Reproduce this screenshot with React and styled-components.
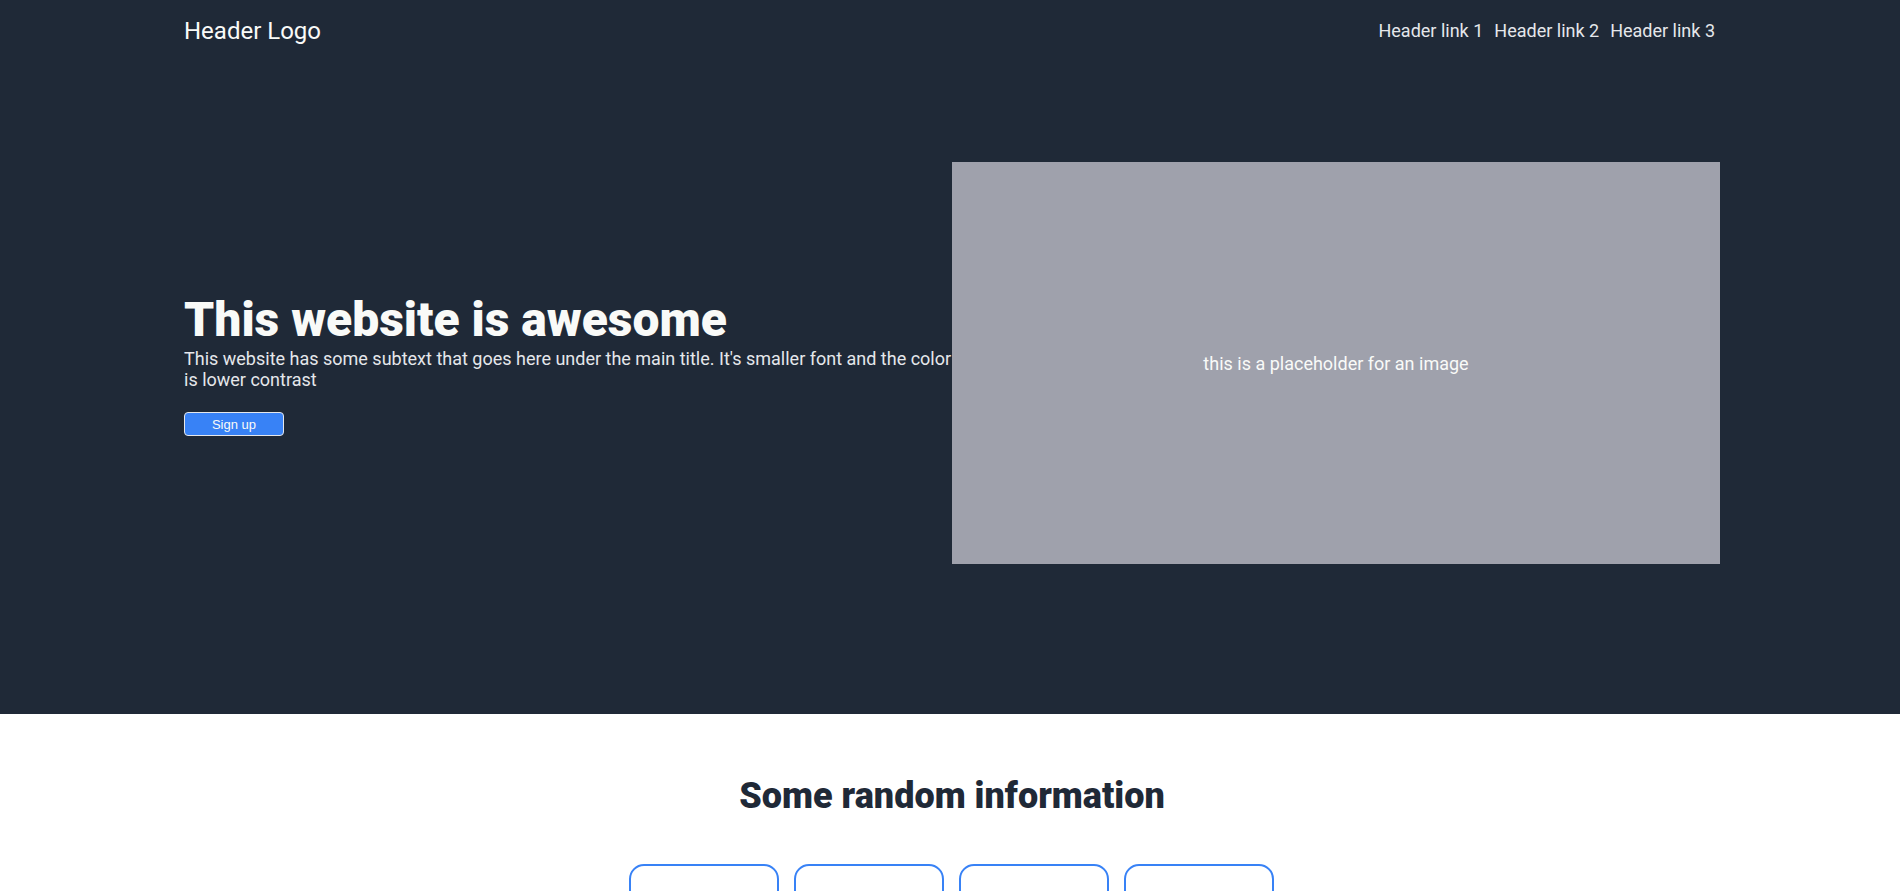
import React from "react";
import styled, { createGlobalStyle } from "styled-components";

const GlobalStyle = createGlobalStyle`
  html, body {
    margin: 0;
    padding: 0;
    background: #ffffff;
  }
  body {
    font-family: Roboto, "Liberation Sans", Arial, sans-serif;
  }
  * { box-sizing: border-box; }
`;

const Hero = styled.section`
  background: #1f2937;
  height: 714px;
  display: flex;
  flex-direction: column;
`;

const Container = styled.div`
  width: 1536px;
  margin-left: calc(50% - 766px);
`;

const Header = styled(Container)`
  display: flex;
  justify-content: space-between;
  align-items: center;
  height: 60px;
  padding-top: 1px;
`;

const Logo = styled.div`
  color: #f9faf8;
  font-size: 24px;
  font-weight: 400;
`;

const Nav = styled.nav`
  display: flex;
  gap: 11px;
  padding-right: 5px;
`;

const NavLink = styled.a`
  color: #e5e7eb;
  font-size: 18px;
  text-decoration: none;
`;

const HeroMain = styled(Container)`
  display: flex;
  align-items: center;
  padding-top: 102px;
`;

const HeroText = styled.div`
  width: 768px;
  display: flex;
  flex-direction: column;
  align-items: flex-start;
`;

const Title = styled.h1`
  margin: 2px 0 0;
  color: #f9faf8;
  font-size: 48px;
  font-weight: 900;
  line-height: 56px;
`;

const Subtext = styled.p`
  margin: 0;
  color: #e5e7eb;
  font-size: 18px;
  line-height: 21px;
`;

const Button = styled.button`
  margin-top: 22px;
  width: 100px;
  height: 24px;
  background: #3882f6;
  color: #f9faf8;
  border: 1px solid #e5e7eb;
  border-radius: 4px;
  font-family: "Liberation Sans", Arial, sans-serif;
  font-size: 13px;
  padding: 0;
`;

const ImagePlaceholder = styled.div`
  width: 768px;
  height: 402px;
  background: #9fa1ac;
  color: #f9faf8;
  font-size: 18px;
  display: flex;
  align-items: center;
  justify-content: center;
`;

const Info = styled.section`
  padding-top: 61px;
`;

const InfoInner = styled(Container)`
  display: flex;
  flex-direction: column;
  align-items: center;
`;

const InfoTitle = styled.h2`
  margin: 0;
  color: #1f2937;
  font-size: 36px;
  font-weight: 900;
  line-height: 42px;
`;

const Cards = styled.div`
  margin-top: 47px;
  display: flex;
  gap: 15px;
  padding-right: 2px;
`;

const Card = styled.div`
  width: 150px;
  height: 150px;
  border: 2px solid #3882f6;
  border-radius: 15px;
`;

export default function App() {
  return (
    <>
      <GlobalStyle />
      <Hero>
        <Header>
          <Logo>Header Logo</Logo>
          <Nav>
            <NavLink href="#">Header link 1</NavLink>
            <NavLink href="#">Header link 2</NavLink>
            <NavLink href="#">Header link 3</NavLink>
          </Nav>
        </Header>
        <HeroMain>
          <HeroText>
            <Title>This website is awesome</Title>
            <Subtext>
              This website has some subtext that goes here under the main title. It's smaller font and the color is lower contrast
            </Subtext>
            <Button>Sign up</Button>
          </HeroText>
          <ImagePlaceholder>this is a placeholder for an image</ImagePlaceholder>
        </HeroMain>
      </Hero>
      <Info>
        <InfoInner>
          <InfoTitle>Some random information</InfoTitle>
          <Cards>
            <Card />
            <Card />
            <Card />
            <Card />
          </Cards>
        </InfoInner>
      </Info>
    </>
  );
}
